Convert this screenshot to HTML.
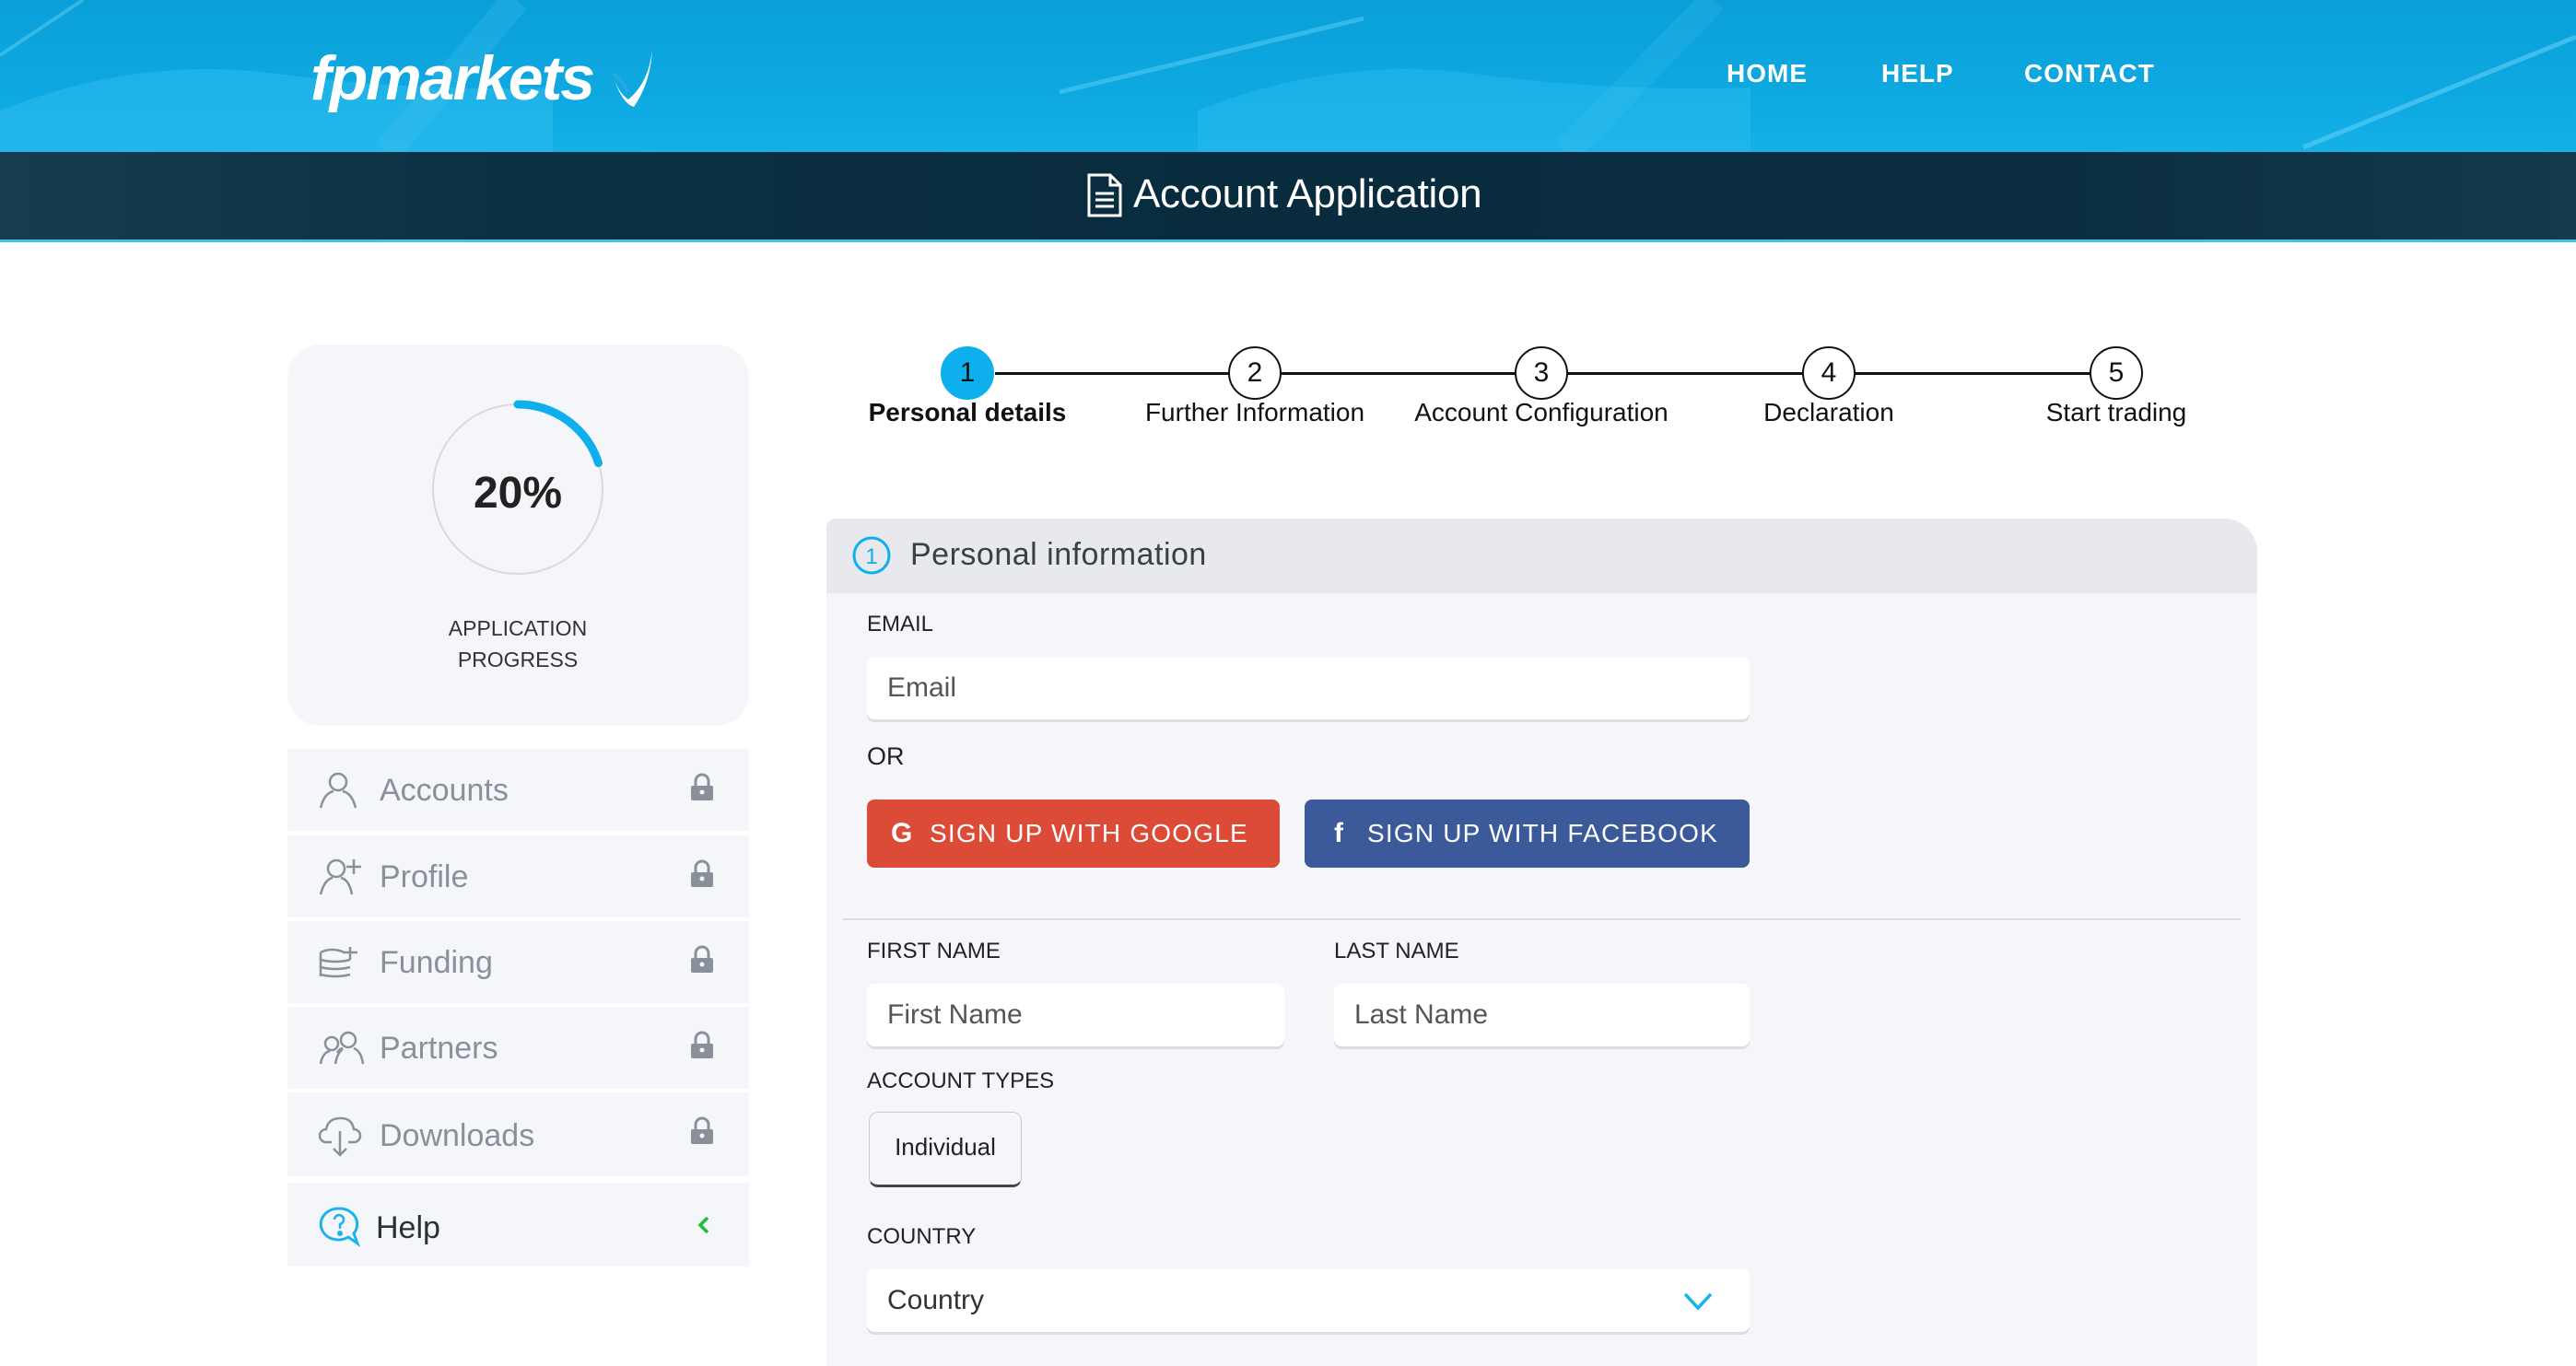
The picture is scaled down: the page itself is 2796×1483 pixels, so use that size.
<!DOCTYPE html>
<html><head><meta charset="utf-8"><style>
*{margin:0;padding:0;box-sizing:border-box}
body{width:2796px;height:1474px;overflow:hidden;background:#fff;font-family:"Liberation Sans",Arial,sans-serif;position:relative}
.abs{position:absolute}
#hdr{left:0;top:0;width:2796px;height:165px;background:linear-gradient(180deg,#0a9fd8 0%,#0ea8e0 60%,#14b0e6 100%);overflow:hidden}
#band{left:0;top:165px;width:2796px;height:95px;background:linear-gradient(90deg,#163d4e 0%,#0b3042 20%,#082c3d 50%,#0a2e40 80%,#143a4c 100%)}
#line{left:0;top:260px;width:2796px;height:3px;background:#3ec3f0}
.nav{top:64px;color:#fff;font-weight:bold;font-size:28px;letter-spacing:1px}
.card{left:312px;top:374px;width:501px;height:414px;background:#f4f6f9;border-radius:36px}
.mi{left:312px;width:501px;height:89px;background:#f4f6f9}
.mi span{position:absolute;left:100px;top:26px;font-size:34px;color:#8a909a}
.mi svg.ic{position:absolute;left:34px;top:24px}
.mi svg.lk{position:absolute;left:436px;top:26px}
.step{top:376px;width:58px;height:58px;border-radius:50%;border:2px solid #111;background:#fff;font-size:30px;text-align:center;line-height:54px;color:#111}
.sl{top:432px;font-size:28px;color:#111;text-align:center;width:320px}
.lbl{font-size:24px;color:#222}
.inp{background:#fff;border-radius:8px;box-shadow:0 3px 0 #dcdde2;font-size:30px;color:#555;padding-left:22px}
.btn{height:74px;border-radius:8px;color:#fff;font-size:28px;letter-spacing:1.2px;line-height:74px;white-space:nowrap}
</style></head><body>
<div id="hdr" class="abs">
<svg width="2796" height="165" style="position:absolute;left:0;top:0">
<path d="M0 120 Q150 60 300 80 T600 95 L600 165 L0 165Z" fill="#2fbdf0" opacity=".5"/>
<path d="M1300 120 Q1450 60 1600 80 T1900 95 L1900 165 L1300 165Z" fill="#2fbdf0" opacity=".45"/>
<path d="M2500 160 L2796 40" stroke="#5fd0f5" stroke-width="5" opacity=".6"/>
<path d="M1150 100 L1480 20" stroke="#5fd0f5" stroke-width="5" opacity=".5"/>
<path d="M0 60 L90 0" stroke="#5fd0f5" stroke-width="4" opacity=".5"/>
<path d="M420 165 L560 0" stroke="#4ac5f0" stroke-width="30" opacity=".25"/>
<path d="M1700 165 L1860 0" stroke="#4ac5f0" stroke-width="30" opacity=".2"/>
</svg>
</div>
<div id="band" class="abs"></div>
<div id="line" class="abs"></div>
<div class="abs" style="left:337px;top:46px;color:#fff;font-size:68px;font-weight:bold;font-style:italic;letter-spacing:-2px">fpmarkets</div>
<svg class="abs" style="left:660px;top:50px" width="60" height="72"><path d="M4 28 Q10 50 22 58 Q44 40 48 4 Q46 40 28 66 Q14 62 4 28Z" fill="#fff"/><path d="M6 30 Q14 36 22 50" stroke="#2aa8e0" stroke-width="4" fill="none"/></svg>
<div class="abs nav" style="left:1874px">HOME</div>
<div class="abs nav" style="left:2042px">HELP</div>
<div class="abs nav" style="left:2197px">CONTACT</div>
<svg class="abs" style="left:1179px;top:188px" width="40" height="48" fill="none" stroke="#fff" stroke-width="3"><path d="M3 2 H26 L37 13 V46 H3Z M26 2 V13 H37"/><path d="M10 22 H30 M10 29 H30 M10 36 H30"/></svg>
<div class="abs" style="left:1230px;top:186px;color:#fff;font-size:44px;font-weight:300;letter-spacing:-0.3px">Account Application</div>

<div class="abs card"></div>
<svg class="abs" style="left:462px;top:431px" width="200" height="200"><circle cx="100" cy="100" r="92" fill="none" stroke="#d8dadd" stroke-width="2"/><path d="M100 8 A92 92 0 0 1 187.5 71.6" fill="none" stroke="#0db0ec" stroke-width="9" stroke-linecap="round"/></svg>
<div class="abs" style="left:462px;top:508px;width:200px;text-align:center;font-size:48px;font-weight:bold;color:#222">20%</div>
<div class="abs" style="left:412px;top:665px;width:300px;text-align:center;font-size:23px;color:#333;line-height:34px">APPLICATION<br>PROGRESS</div>

<div class="abs mi" style="top:813px"><svg class="ic" width="44" height="42" fill="none" stroke="#8a909a" stroke-width="2.5"><circle cx="21" cy="12" r="9"/><path d="M2 40 Q6 24 16 22 M26 22 Q36 24 40 40"/></svg><span>Accounts</span><svg class="lk" width="28" height="32"><path d="M7 14 V9 a7 7 0 0 1 14 0 V14" stroke="#8a909a" stroke-width="3" fill="none"/><rect x="2" y="14" width="24" height="16" rx="2" fill="#8a909a"/><circle cx="14" cy="21" r="2.5" fill="#f4f6f9"/></svg></div>
<div class="abs mi" style="top:907px"><svg class="ic" width="48" height="42" fill="none" stroke="#8a909a" stroke-width="2.5"><circle cx="19" cy="12" r="9"/><path d="M2 40 Q6 24 15 22 M24 22 Q33 24 36 40 M38 2 V18 M30 10 H46"/></svg><span>Profile</span><svg class="lk" width="28" height="32"><path d="M7 14 V9 a7 7 0 0 1 14 0 V14" stroke="#8a909a" stroke-width="3" fill="none"/><rect x="2" y="14" width="24" height="16" rx="2" fill="#8a909a"/><circle cx="14" cy="21" r="2.5" fill="#f4f6f9"/></svg></div>
<div class="abs mi" style="top:1000px"><svg class="ic" width="44" height="42" fill="none" stroke="#8a909a" stroke-width="2.5"><path d="M2 10 Q14 4 28 10 M2 18 Q18 22 34 18 M2 26 Q18 30 34 26 M2 34 Q18 38 34 34 M2 10 V36 M34 4 V18 M26 10 H42"/></svg><span>Funding</span><svg class="lk" width="28" height="32"><path d="M7 14 V9 a7 7 0 0 1 14 0 V14" stroke="#8a909a" stroke-width="3" fill="none"/><rect x="2" y="14" width="24" height="16" rx="2" fill="#8a909a"/><circle cx="14" cy="21" r="2.5" fill="#f4f6f9"/></svg></div>
<div class="abs mi" style="top:1093px"><svg class="ic" width="50" height="42" fill="none" stroke="#8a909a" stroke-width="2.5"><circle cx="14" cy="16" r="7"/><circle cx="32" cy="12" r="8"/><path d="M2 38 Q4 26 12 24 M20 26 Q22 22 26 21 M38 21 Q46 24 48 38 M18 38 Q20 26 26 22"/></svg><span>Partners</span><svg class="lk" width="28" height="32"><path d="M7 14 V9 a7 7 0 0 1 14 0 V14" stroke="#8a909a" stroke-width="3" fill="none"/><rect x="2" y="14" width="24" height="16" rx="2" fill="#8a909a"/><circle cx="14" cy="21" r="2.5" fill="#f4f6f9"/></svg></div>
<div class="abs mi" style="top:1186px;height:91px"><svg class="ic" width="48" height="48" fill="none" stroke="#8a909a" stroke-width="2.5"><path d="M14 30 H8 a7 7 0 0 1 0-14 Q10 4 24 4 Q36 4 38 16 a7 7 0 0 1 0 14 H32 M23 18 V44 M16 37 L23 44 L30 37"/></svg><span style="top:28px">Downloads</span><svg class="lk" width="28" height="32"><path d="M7 14 V9 a7 7 0 0 1 14 0 V14" stroke="#8a909a" stroke-width="3" fill="none"/><rect x="2" y="14" width="24" height="16" rx="2" fill="#8a909a"/><circle cx="14" cy="21" r="2.5" fill="#f4f6f9"/></svg></div>
<div class="abs mi" style="top:1284px;height:91px"><svg class="ic" width="46" height="46" fill="none" stroke="#1ab3ea" stroke-width="3"><path d="M22 4 a19 17 0 1 0 10 31 L42 42 L38 31 A19 17 0 0 0 22 4Z"/><path d="M17 16 a5 5 0 1 1 6 5 V26" stroke-width="2.5"/><circle cx="23" cy="31" r="1.5" fill="#1ab3ea"/></svg><span style="color:#2a2f38;left:96px;top:30px">Help</span><svg class="abs" style="left:444px;top:35px" width="16" height="22"><path d="M12 3 L4 11 L12 19" stroke="#1bbf3a" stroke-width="3.5" fill="none"/></svg></div>

<!-- stepper -->
<div class="abs" style="left:1080px;top:404px;width:1190px;height:3px;background:#111"></div>
<div class="abs step" style="left:1021px;background:#0db0ec;border-color:#0db0ec">1</div>
<div class="abs step" style="left:1333px">2</div>
<div class="abs step" style="left:1644px">3</div>
<div class="abs step" style="left:1956px">4</div>
<div class="abs step" style="left:2268px">5</div>
<div class="abs sl" style="left:890px;font-weight:bold">Personal details</div>
<div class="abs sl" style="left:1202px">Further Information</div>
<div class="abs sl" style="left:1513px">Account Configuration</div>
<div class="abs sl" style="left:1825px">Declaration</div>
<div class="abs sl" style="left:2137px">Start trading</div>

<!-- form panel -->
<div class="abs" style="left:897px;top:563px;width:1553px;height:920px;background:#f5f6f9;border-radius:10px 36px 0 0;overflow:hidden">
<div style="height:81px;background:#e8e9ed"></div>
</div>
<svg class="abs" style="left:924px;top:581px" width="44" height="44"><circle cx="22" cy="22" r="19" fill="none" stroke="#0db0ec" stroke-width="3"/><text x="22" y="31" text-anchor="middle" font-family="Liberation Sans" font-size="24" fill="#0db0ec">1</text></svg>
<div class="abs" style="left:988px;top:583px;font-size:34px;color:#3a3f48;letter-spacing:.5px">Personal information</div>
<div class="abs lbl" style="left:941px;top:664px">EMAIL</div>
<div class="abs inp" style="left:941px;top:713px;width:958px;height:68px;line-height:68px">Email</div>
<div class="abs lbl" style="left:941px;top:806px;font-size:27px">OR</div>
<div class="abs btn" style="left:941px;top:868px;width:448px;background:#dc4a38"><span style="position:absolute;left:26px;font-weight:bold;font-size:30px">G</span><span style="position:absolute;left:68px">SIGN UP WITH GOOGLE</span></div>
<div class="abs btn" style="left:1416px;top:868px;width:483px;background:#3c5a9a"><span style="position:absolute;left:32px;font-weight:bold;font-size:30px">f</span><span style="position:absolute;left:68px">SIGN UP WITH FACEBOOK</span></div>
<div class="abs" style="left:915px;top:997px;width:1517px;height:2px;background:#dcdde2"></div>
<div class="abs lbl" style="left:941px;top:1019px">FIRST NAME</div>
<div class="abs lbl" style="left:1448px;top:1019px">LAST NAME</div>
<div class="abs inp" style="left:941px;top:1068px;width:453px;height:68px;line-height:68px">First Name</div>
<div class="abs inp" style="left:1448px;top:1068px;width:451px;height:68px;line-height:68px">Last Name</div>
<div class="abs lbl" style="left:941px;top:1160px">ACCOUNT TYPES</div>
<div class="abs" style="left:943px;top:1207px;width:166px;height:82px;border:1px solid #c9cbd0;border-bottom:3px solid #444;border-radius:10px;background:#f5f6f9;font-size:26px;color:#222;text-align:center;line-height:74px">Individual</div>
<div class="abs lbl" style="left:941px;top:1329px">COUNTRY</div>
<div class="abs inp" style="left:941px;top:1378px;width:958px;height:68px;line-height:68px;color:#333">Country</div>
<svg class="abs" style="left:1826px;top:1402px" width="34" height="22"><path d="M3 3 L17 18 L31 3" stroke="#1ab3ea" stroke-width="3.5" fill="none"/></svg>
</body></html>
